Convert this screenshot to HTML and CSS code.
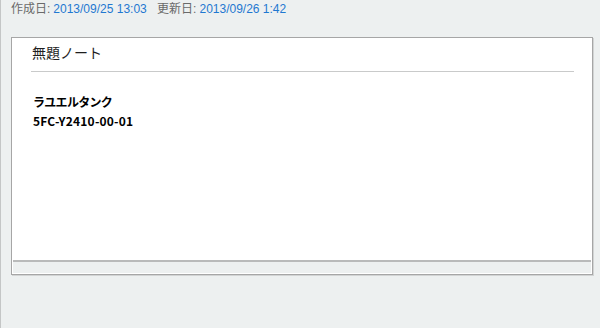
FILE: index.html
```html
<!DOCTYPE html>
<html lang="ja">
<head>
<meta charset="utf-8">
<link rel="stylesheet" href="styles.css">
</head>
<body>
<div class="meta">
  <span class="label">作成日:</span><span class="value">2013/09/25 13:03</span>
  <span class="label second">更新日:</span><span class="value">2013/09/26 1:42</span>
</div>
<div class="card">
  <div class="content">
    <div class="title">無題ノート</div>
    <div class="body">
      <div class="line kana">ラユエルタンク</div>
      <div class="line code">5FC-Y2410-00-01</div>
    </div>
  </div>
  <div class="footer"></div>
</div>
</body>
</html>
```

FILE: styles.css
```css
html, body {
  margin: 0;
  padding: 0;
}
body {
  width: 599px;
  height: 328px;
  background: #edf0f0;
  border-left: 1px solid #c4c6c6;
  font-family: "Liberation Sans", "Noto Sans CJK JP", sans-serif;
  overflow: hidden;
}
.meta {
  height: 18px;
  padding-left: 10px;
  font-size: 12px;
  line-height: 18px;
  white-space: nowrap;
}
.label {
  color: #6a6a6a;
  margin-right: 3px;
}
.label.second {
  margin-left: 7px;
}
.value {
  color: #1f78d1;
}
.card {
  margin: 19px 0 0 10px;
  width: 578px;
  border: 1px solid #a6a6a6;
  padding: 1px;
  background: #fff;
  box-shadow: 1px 1px 0 #d2d4d4;
}
.content {
  height: 221px;
}
.title {
  margin: 0 17px 0 18px;
  padding: 3px 0 9px 1px;
  border-bottom: 1px solid #c9caca;
  font-family: "Noto Sans CJK JP", sans-serif;
  font-size: 14px;
  line-height: 20px;
  color: #1e1e1e;
}
.body {
  padding: 20px 0 0 20px;
  font-family: "Noto Sans CJK JP", sans-serif;
  font-size: 12px;
  font-weight: bold;
  line-height: 19px;
  color: #000;
}
.kana {
  letter-spacing: -0.7px;
}
.code {
  letter-spacing: 0.2px;
}
.line {
  white-space: nowrap;
}
.footer {
  height: 11px;
  border-top: 2px solid #b9baba;
  background: #edf0f0;
}
```
